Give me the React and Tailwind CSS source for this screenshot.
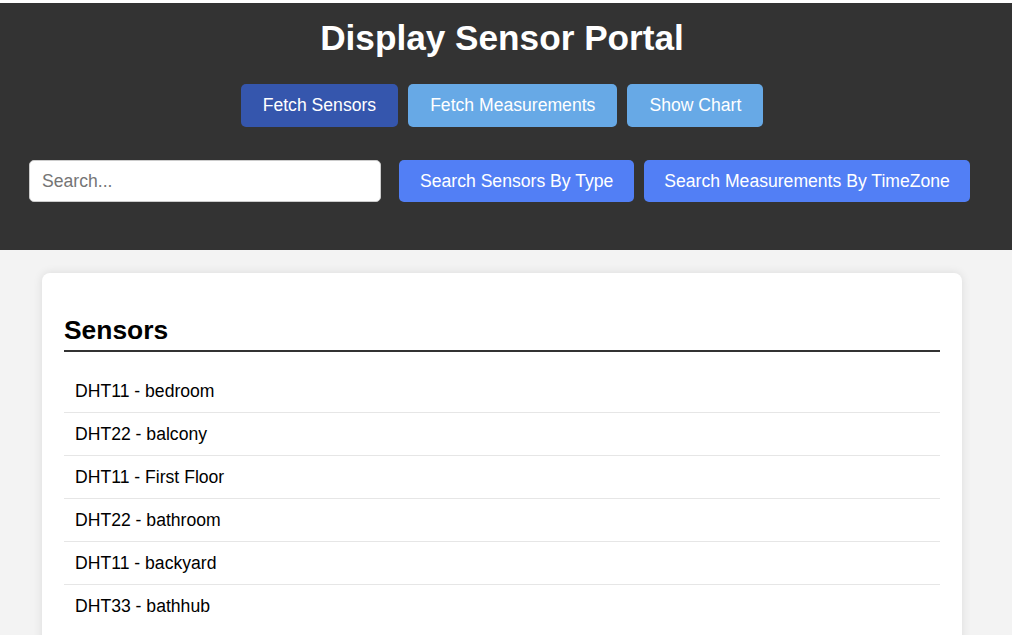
const sensors = [
  'DHT11 - bedroom',
  'DHT22 - balcony',
  'DHT11 - First Floor',
  'DHT22 - bathroom',
  'DHT11 - backyard',
  'DHT33 - bathhub',
];

function Header() {
  return (
    <header className="bg-[#333333] border-t-[3px] border-white pt-[15px] pb-[48px] pr-[8px]">
      <h1 className="text-center text-white font-bold text-[35.2px] leading-[40px]">
        Display Sensor Portal
      </h1>
      <div className="flex justify-center gap-[10px] mt-[26px]">
        <button className="h-[43px] px-[22px] rounded-[5px] bg-[#3556ad] text-white text-[17.6px]">
          Fetch Sensors
        </button>
        <button className="h-[43px] px-[22px] rounded-[5px] bg-[#67a9e6] text-white text-[17.6px]">
          Fetch Measurements
        </button>
        <button className="h-[43px] px-[22px] rounded-[5px] bg-[#67a9e6] text-white text-[17.6px]">
          Show Chart
        </button>
      </div>
      <div className="flex items-center mt-[33px] pl-[29px]">
        <input
          type="text"
          placeholder="Search..."
          className="w-[352px] h-[42px] px-[12px] rounded-[5px] bg-white border border-[#cccccc] text-[17.6px] text-black placeholder:text-[#757575] outline-none"
        />
        <button className="ml-[18px] h-[42px] px-[21px] rounded-[5px] bg-[#527ff5] text-white text-[17.6px]">
          Search Sensors By Type
        </button>
        <button className="ml-[10px] h-[42px] px-[20px] rounded-[5px] bg-[#527ff5] text-white text-[17.6px]">
          Search Measurements By TimeZone
        </button>
      </div>
    </header>
  );
}

export default function App() {
  return (
    <div className="h-screen overflow-hidden bg-[#f3f3f3] font-['Liberation_Sans',Arial,sans-serif]">
      <Header />
      <main className="pl-[42px] pr-[50px] pt-[23px]">
        <section className="bg-white rounded-[8px] shadow-[0_0_10px_rgba(0,0,0,0.1)] px-[22px] pt-[42px] pb-[30px]">
          <h2 className="text-[26.4px] leading-[30px] font-bold text-black pb-[5px] border-b-2 border-[#333333]">
            Sensors
          </h2>
          <ul className="mt-[18px]">
            {sensors.map((s) => (
              <li
                key={s}
                className="pl-[11px] py-[10px] text-[17.6px] leading-[22px] text-black border-b border-[#e6e6e6] last:border-b-0"
              >
                {s}
              </li>
            ))}
          </ul>
        </section>
      </main>
    </div>
  );
}
